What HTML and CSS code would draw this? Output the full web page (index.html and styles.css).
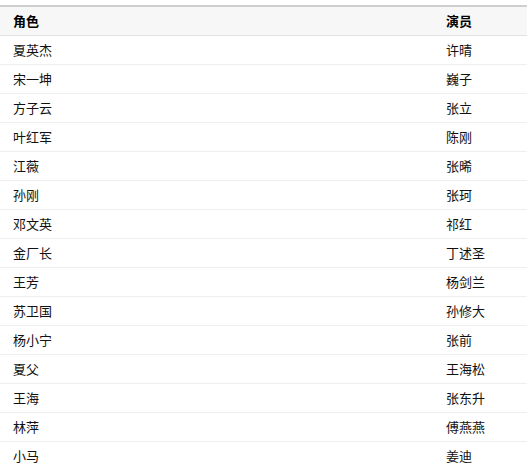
FILE: index.html
```html
<!DOCTYPE html>
<html lang="zh-CN">
<head>
    <meta charset="UTF-8">
    <title>角色表</title>
    <link rel="stylesheet" href="styles.css">
</head>
<body>
    <table class="cast-table">
        <tr>
            <th class="col-role">角色</th>
            <th>演员</th>
        </tr>
        <tr><td>夏英杰</td><td>许晴</td></tr>
        <tr><td>宋一坤</td><td>巍子</td></tr>
        <tr><td>方子云</td><td>张立</td></tr>
        <tr><td>叶红军</td><td>陈刚</td></tr>
        <tr><td>江薇</td><td>张晞</td></tr>
        <tr><td>孙刚</td><td>张珂</td></tr>
        <tr><td>邓文英</td><td>祁红</td></tr>
        <tr><td>金厂长</td><td>丁述圣</td></tr>
        <tr><td>王芳</td><td>杨剑兰</td></tr>
        <tr><td>苏卫国</td><td>孙修大</td></tr>
        <tr><td>杨小宁</td><td>张前</td></tr>
        <tr><td>夏父</td><td>王海松</td></tr>
        <tr><td>王海</td><td>张东升</td></tr>
        <tr><td>林萍</td><td>傅燕燕</td></tr>
        <tr><td>小马</td><td>姜迪</td></tr>
    </table>
</body>
</html>
```

FILE: styles.css
```css
body {
    margin: 0;
    padding-top: 5px;
    background: #fff;
    font-family: "Noto Sans CJK SC", "Liberation Sans", sans-serif;
    font-size: 13px;
    color: #111;
}

.cast-table {
    width: 527px;
    border-collapse: collapse;
    border-top: 2px solid #cfcfcf;
}

.cast-table th,
.cast-table td {
    height: 28px;
    padding: 0 13px;
    text-align: left;
    border-bottom: 1px solid #eeeeee;
    line-height: 16px;
}

.cast-table th {
    background: #f7f7f7;
    font-weight: bold;
    color: #000;
    border-bottom-color: #e2e2e2;
}

.cast-table .col-role {
    width: 407px;
}
```
